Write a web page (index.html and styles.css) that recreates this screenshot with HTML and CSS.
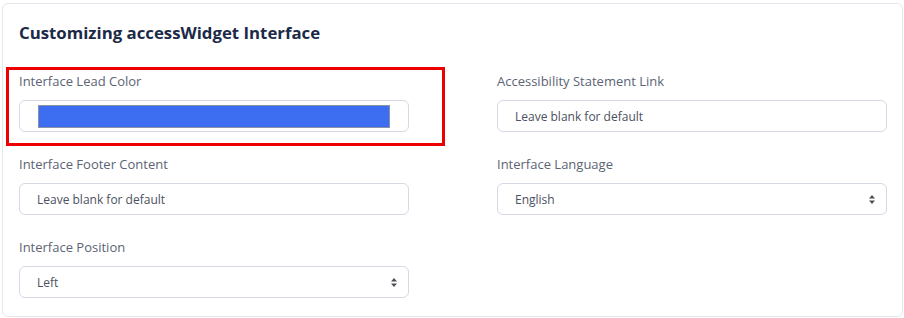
FILE: index.html
```html
<!DOCTYPE html>
<html lang="en">
<head>
  <meta charset="UTF-8">
  <meta name="viewport" content="width=device-width, initial-scale=1.0">
  <title>Customizing accessWidget Interface</title>
  <link rel="stylesheet" href="styles.css">
</head>
<body>
  <div class="card">
    <h2 class="card-title">Customizing accessWidget Interface</h2>
    <div class="form-grid">
      <div class="field highlight">
        <label>Interface Lead Color</label>
        <div class="input color-input"><span class="swatch"></span></div>
      </div>
      <div class="field">
        <label>Accessibility Statement Link</label>
        <div class="input"><span class="placeholder">Leave blank for default</span></div>
      </div>
      <div class="field">
        <label>Interface Footer Content</label>
        <div class="input"><span class="placeholder">Leave blank for default</span></div>
      </div>
      <div class="field">
        <label>Interface Language</label>
        <div class="input select">
          <span class="value">English</span>
          <svg class="caret" width="6" height="9" viewBox="0 0 6 9"><path d="M3 0L6 3.5H0Z M3 9L0 5.5H6Z" fill="#4a4f58"/></svg>
        </div>
      </div>
      <div class="field">
        <label>Interface Position</label>
        <div class="input select">
          <span class="value">Left</span>
          <svg class="caret" width="6" height="9" viewBox="0 0 6 9"><path d="M3 0L6 3.5H0Z M3 9L0 5.5H6Z" fill="#4a4f58"/></svg>
        </div>
      </div>
    </div>
  </div>
</body>
</html>
```

FILE: styles.css
```css
*{
  box-sizing: border-box;
}
body{
  margin: 0;
  padding: 3px 1px 0 2px;
  background: #fff;
  font-family: "Open Sans", "Liberation Sans", sans-serif;
}
.card{
  border: 1px solid #e3e7ed;
  border-radius: 6px;
  padding: 17px 15px 18px 16px;
  background: #fff;
}
.card-title{
  margin: 0 0 27px;
  font-size: 16.8px;
  line-height: 24px;
  font-weight: 700;
  color: #1b2a47;
}
.form-grid{
  display: grid;
  grid-template-columns: 390px 390px;
  column-gap: 88px;
  row-gap: 23px;
}
.field{
  position: relative;
}
.field label{
  display: block;
  height: 18px;
  margin-bottom: 10px;
  font-size: 13px;
  line-height: 18px;
  color: #5b6474;
}
.field.highlight::after{
  content: "";
  position: absolute;
  left: -13px;
  right: -36px;
  top: -5px;
  bottom: -14px;
  border: 3px solid #ee0000;
  pointer-events: none;
}
.input{
  height: 32px;
  border: 1.5px solid #d4d9e5;
  border-radius: 6px;
  display: flex;
  align-items: center;
  padding: 0 17px;
  font-size: 12px;
  color: #4b5160;
}
.color-input{
  padding: 0 18px;
}
.swatch{
  display: block;
  width: 100%;
  height: 23px;
  background: #3d6ef2;
  border: 1px solid #8a93a3;
}
.select{
  justify-content: space-between;
  padding-right: 11px;
}
.caret{
  display: block;
}
```
